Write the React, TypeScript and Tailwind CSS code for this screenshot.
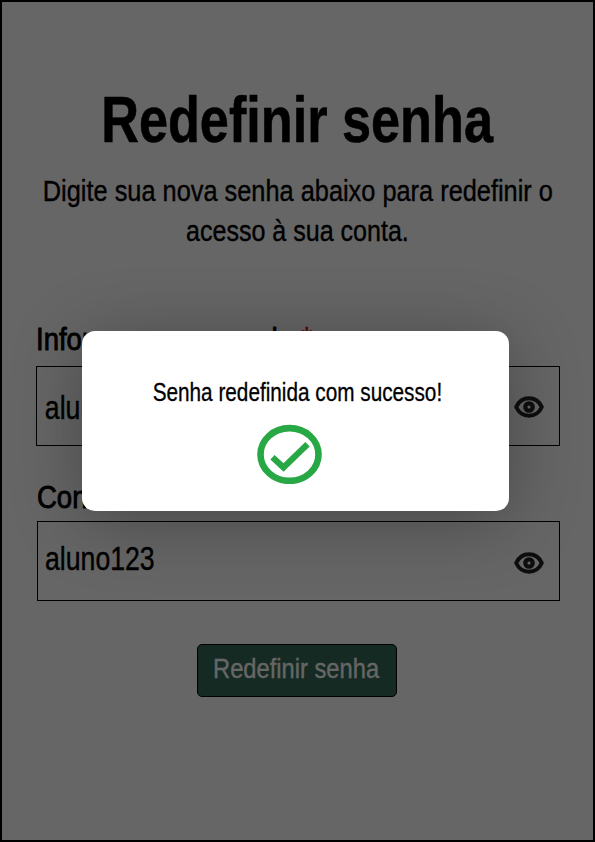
import type { ReactNode } from "react";

function Eye() {
  return (
    <svg className="h-[22px] w-[30px] shrink-0" viewBox="0 0 30 22" fill="none" stroke="#252525">
      <path d="M2.200 11C5 4.800 10.200 2.300 15 2.300S25 4.800 27.800 11C25 17.200 19.800 19.700 15 19.700S5 17.200 2.200 11Z" strokeWidth="4" strokeLinejoin="round" />
      <circle cx="15" cy="11" r="3.700" strokeWidth="4.300" />
    </svg>
  );
}

function Label({ children }: { children: ReactNode }) {
  return (
    <label className="block h-10 w-max origin-left scale-x-[0.86] whitespace-nowrap text-[32px] leading-10 [-webkit-text-stroke:0.9px_currentColor]">
      {children}<span className="-ml-px text-[33px] leading-none text-red-600 [-webkit-text-stroke:0.5px_currentColor]">*</span>
    </label>
  );
}

function Field({ value, textClass, iconClass }: { value: string; textClass: string; iconClass: string }) {
  return (
    <div className="flex h-20 items-center justify-between border border-black pr-[15px] pl-[7px]">
      <span className={`origin-left scale-x-[0.82] text-[32.5px] leading-10 [-webkit-text-stroke:0.4px_currentColor] ${textClass}`}>{value}</span>
      <span className={iconClass}><Eye /></span>
    </div>
  );
}

export default function App() {
  return (
    <div className="relative h-[842px] w-[595px] overflow-hidden bg-white font-['Liberation_Sans',Arial,sans-serif] text-black">
      <main className="flex flex-col items-center pt-[80px]">
        <h1 className="h-20 scale-x-[0.816] whitespace-nowrap text-[64px] leading-[80px] font-bold [-webkit-text-stroke:0.6px_currentColor]">Redefinir senha</h1>
        <p className="mt-[11px] flex flex-col items-center text-[30px] leading-10 whitespace-nowrap [-webkit-text-stroke:0.4px_currentColor]">
          <span className="block scale-x-[0.845]">Digite sua nova senha abaixo para redefinir o</span>
          <span className="block scale-x-[0.835]">acesso à sua conta.</span>
        </p>
        <form className="mt-[68px] w-[524px]">
          <Label>Informe a nova senha</Label>
          <div className="mt-[7px]"><Field value="aluno123" textClass="pt-1 pl-px" iconClass="pt-px" /></div>
          <div className="mt-[31px] ml-px"><Label>Confirme a nova senha</Label></div>
          <div className="mt-1 ml-px"><Field value="aluno123" textClass="pb-1" iconClass="pt-1" /></div>
        </form>
        <button className="mt-[43px] mr-[2px] flex h-[53px] w-[200px] items-center justify-center rounded-[5px] border border-black bg-[#346a58] pb-1 text-[28px] leading-8 whitespace-nowrap text-white">
          <span className="scale-x-[0.847] [-webkit-text-stroke:0.3px_currentColor]">Redefinir senha</span>
        </button>
      </main>
      <div className="absolute inset-0 border-2 border-black bg-black/60 bg-clip-padding" />
      <div role="dialog" className="absolute top-[331px] left-[82px] flex h-[180px] w-[427px] flex-col items-center rounded-[13px] bg-white pt-[45px] shadow-[0_10px_70px_rgba(0,0,0,0.3)]">
        <p className="ml-1 h-8 scale-x-[0.83] text-[25px] leading-8 whitespace-nowrap [-webkit-text-stroke:0.3px_currentColor]">Senha redefinida com sucesso!</p>
        <svg className="mt-4 mr-3 h-[60px] w-[66px]" viewBox="0 0 66 60" fill="none" stroke="#28a745">
          <ellipse cx="32.500" cy="30.500" rx="29" ry="26.400" strokeWidth="6.600" />
          <path d="M15.500 33.300L26.500 43.500L50.500 20.300" strokeWidth="6.200" />
        </svg>
      </div>
    </div>
  );
}
